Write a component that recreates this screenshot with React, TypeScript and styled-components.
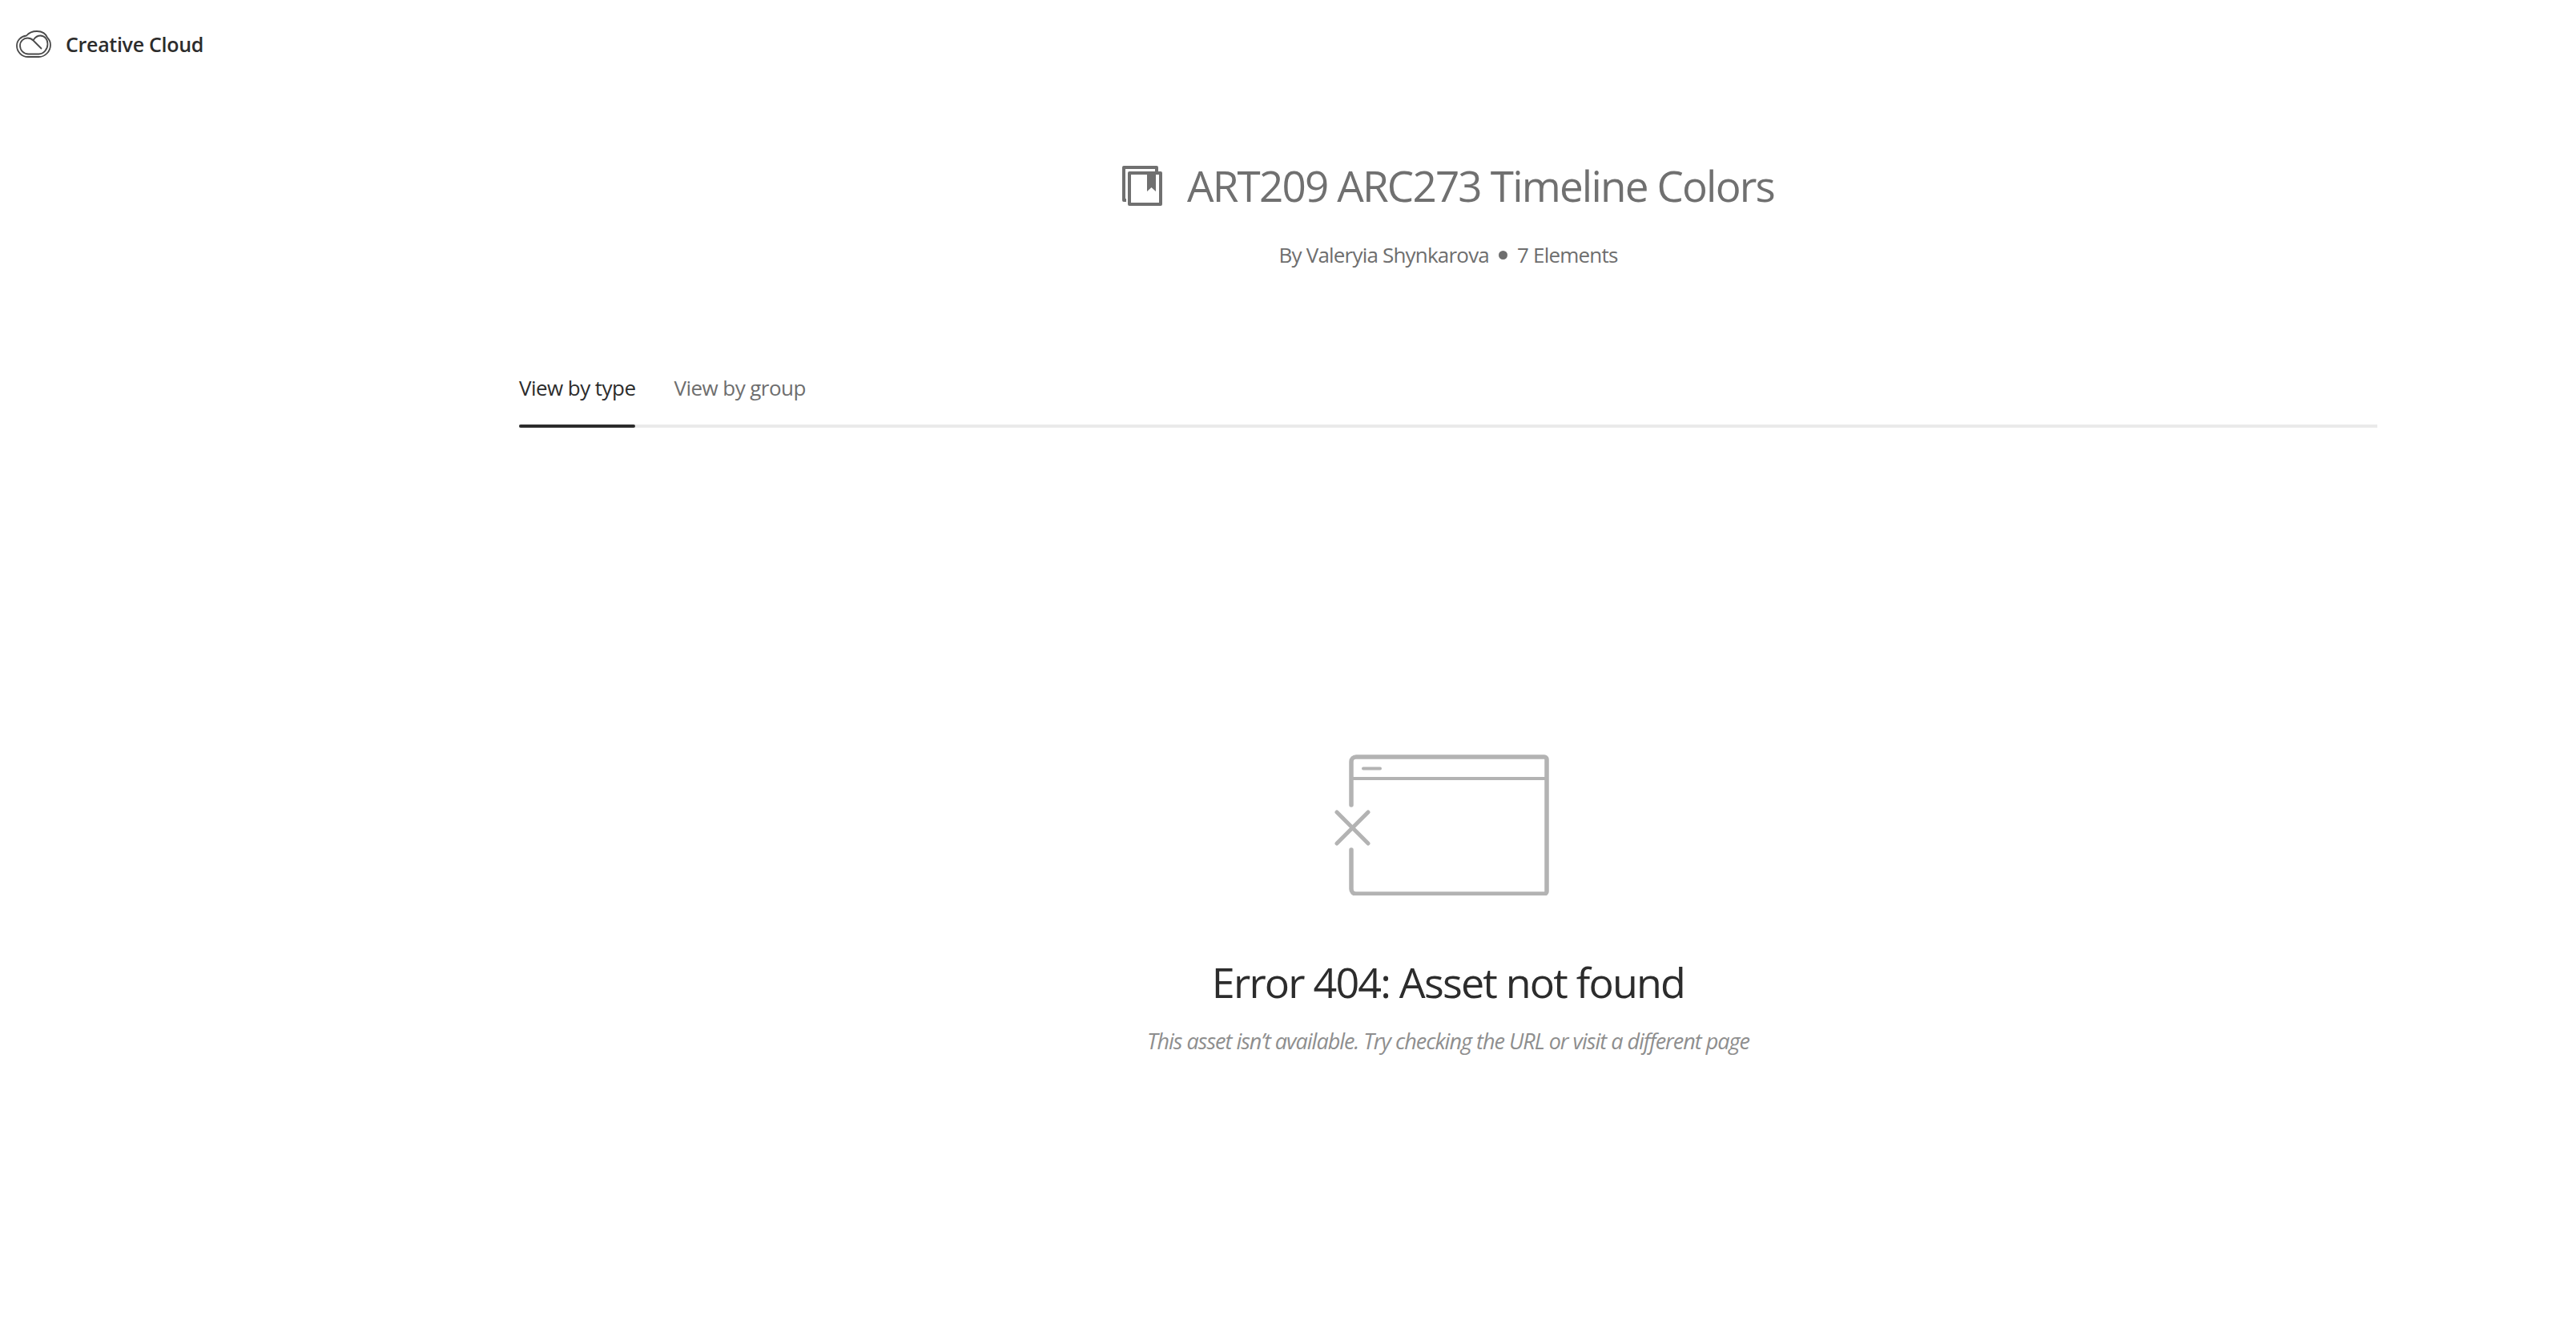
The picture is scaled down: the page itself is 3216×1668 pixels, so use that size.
import styled, { createGlobalStyle } from "styled-components";

const GlobalStyle = createGlobalStyle`
  html, body {
    margin: 0;
    padding: 0;
    background: #fff;
    font-family: "Open Sans", "Noto Sans", sans-serif;
  }
`;

const Page = styled.div`
  width: 3216px;
  height: 1668px;
  overflow: hidden;
  background: #fff;
`;

const TopBar = styled.header`
  display: flex;
  align-items: center;
  gap: 18px;
  height: 34px;
  padding: 38px 0 0 20px;
`;

const BrandName = styled.span`
  font-size: 25px;
  font-weight: 600;
  letter-spacing: -0.3px;
  color: #2c2c2c;
`;

const Main = styled.main`
  padding: 0 248px 0 648px;
`;

const Heading = styled.div`
  display: flex;
  flex-direction: column;
  align-items: center;
  margin-top: 135px;
`;

const TitleRow = styled.div`
  display: flex;
  align-items: center;
  gap: 31px;
  height: 50px;
`;

const Title = styled.h1`
  margin: 0;
  font-size: 53px;
  font-weight: 400;
  letter-spacing: -1.83px;
  line-height: 50px;
  color: #707070;
`;

const Meta = styled.div`
  display: flex;
  align-items: center;
  gap: 12px;
  margin-top: 43px;
  font-size: 26px;
  line-height: 36px;
  letter-spacing: -0.8px;
  color: #6e6e6e;
`;

const Dot = styled.span`
  width: 11px;
  height: 11px;
  border-radius: 50%;
  background: #6e6e6e;
`;

const TabBar = styled.nav`
  display: flex;
  gap: 48px;
  margin-top: 130px;
  border-bottom: 4px solid #eaeaea;
`;

const Tab = styled.div<{ $active?: boolean }>`
  position: relative;
  padding-bottom: 28px;
  font-size: 26px;
  line-height: 36px;
  letter-spacing: -0.55px;
  color: ${(p) => (p.$active ? "#2c2c2c" : "#6e6e6e")};

  &::after {
    content: "";
    display: ${(p) => (p.$active ? "block" : "none")};
    position: absolute;
    left: 0;
    right: 0;
    bottom: -4px;
    height: 4px;
    border-radius: 2px;
    background: #2c2c2c;
  }
`;

const EmptyState = styled.section`
  display: flex;
  flex-direction: column;
  align-items: center;
  margin-top: 408px;
`;

const IconSlot = styled.div`
  display: flex;
  margin-right: 18px;
`;

const ErrorTitle = styled.h2`
  margin: 76px 0 0;
  font-size: 52px;
  font-weight: 400;
  line-height: 64px;
  letter-spacing: -1.8px;
  color: #2c2c2c;
`;

const ErrorText = styled.p`
  margin: 24px 0 0;
  font-size: 27px;
  font-style: italic;
  line-height: 36px;
  letter-spacing: -1px;
  color: #8e8e8e;
`;

function CloudLogo() {
  return (
    <svg width="44" height="34" viewBox="0 0 44 34" fill="none" stroke="#4a4a4a" strokeWidth="1.800" strokeLinecap="round" strokeLinejoin="round">
      <path d="M13 6.500C16 3 21 1 26 1c6.500 0 11.500 3.500 13.500 8.500C42 12 43 14.500 43 18c0 8-6.500 15-14.500 15H15C7 33 1 26.500 1 19c0-6.500 5-11.500 12-12.500z" />
      <path d="M22 11.500c2-3 5-5 8.500-5C36 6.500 39.500 11.500 39.500 17c0 6.500-5 12.500-11 12.500H15.500C9.500 29.500 5 24.500 5 19c0-5.500 4.500-9.500 9.500-9.500 3 0 5 1 7 3l10 10" />
    </svg>
  );
}

function LibraryIcon() {
  return (
    <svg width="50" height="50" viewBox="0 0 50 50" fill="none">
      <path d="M5 43H2V2h41v5" stroke="#707070" strokeWidth="4" strokeLinejoin="round" />
      <rect x="9" y="9" width="39" height="39" stroke="#707070" strokeWidth="4" strokeLinejoin="round" />
      <path d="M31 8h11v24l-5.500-5-5.500 5z" fill="#707070" />
    </svg>
  );
}

function MissingAssetIcon() {
  return (
    <svg width="270" height="176" viewBox="0 0 270 176" fill="none" stroke="#b3b3b3" strokeLinecap="round" strokeLinejoin="round">
      <path d="M23 63V9a6 6 0 0 1 6-6h235a3 3 0 0 1 3 3v165a3 3 0 0 1-3 3H29a6 6 0 0 1-6-6v-49" strokeWidth="5.500" />
      <path d="M23 30h244" strokeWidth="4" />
      <path d="M38 17.500h21" strokeWidth="4" />
      <path d="M5 72l39 39M44 72L5 111" strokeWidth="5" />
    </svg>
  );
}

export default function App() {
  return (
    <Page>
      <GlobalStyle />
      <TopBar>
        <CloudLogo />
        <BrandName>Creative Cloud</BrandName>
      </TopBar>
      <Main>
        <Heading>
          <TitleRow>
            <LibraryIcon />
            <Title>ART209 ARC273 Timeline Colors</Title>
          </TitleRow>
          <Meta>
            <span>By Valeryia Shynkarova</span>
            <Dot />
            <span>7 Elements</span>
          </Meta>
        </Heading>
        <TabBar>
          <Tab $active>View by type</Tab>
          <Tab>View by group</Tab>
        </TabBar>
        <EmptyState>
          <IconSlot>
            <MissingAssetIcon />
          </IconSlot>
          <ErrorTitle>Error 404: Asset not found</ErrorTitle>
          <ErrorText>This asset isn’t available. Try checking the URL or visit a different page</ErrorText>
        </EmptyState>
      </Main>
    </Page>
  );
}
